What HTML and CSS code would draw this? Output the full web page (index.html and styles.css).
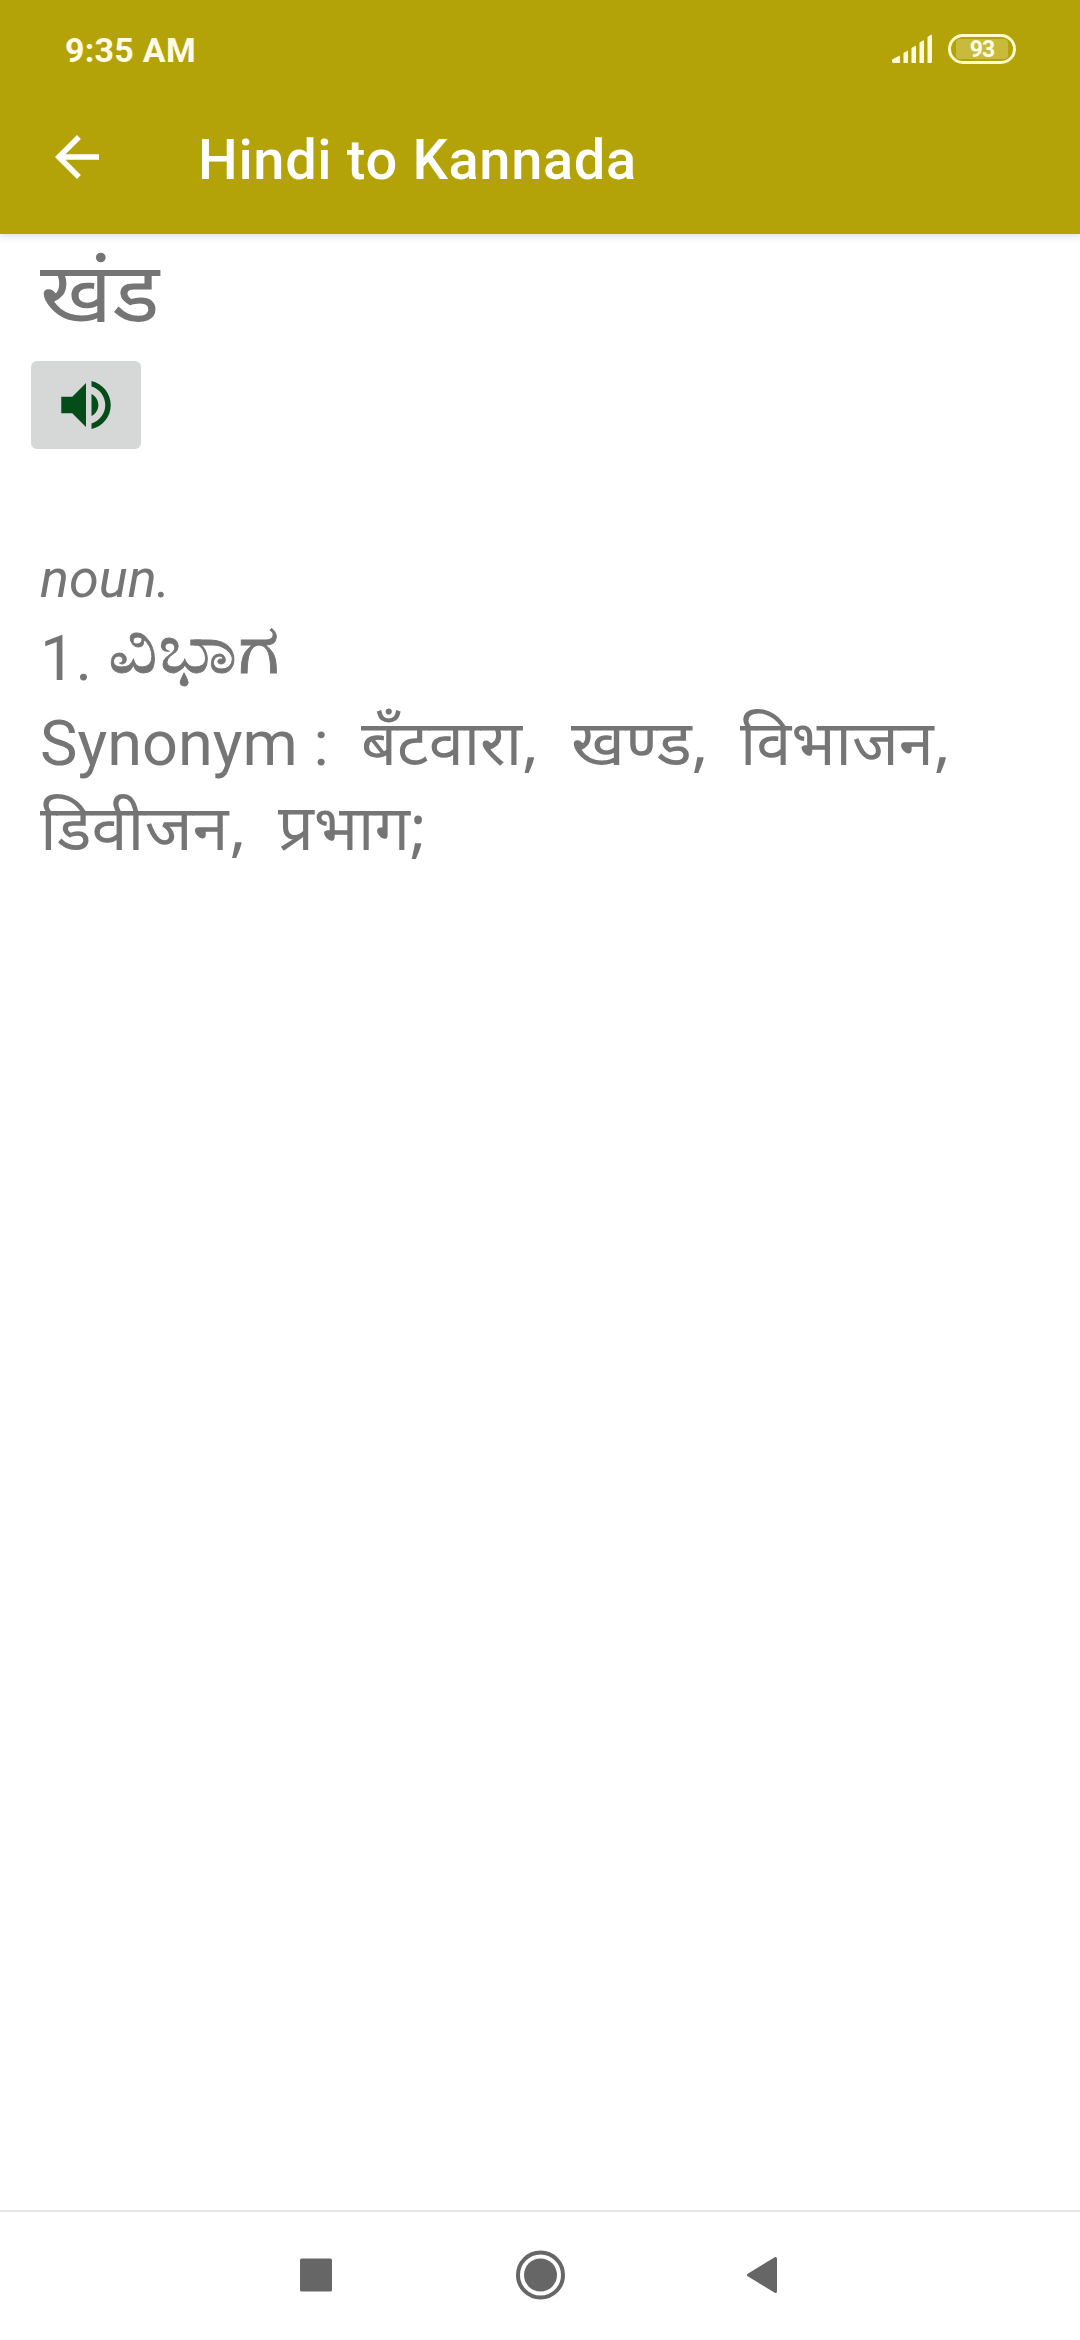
FILE: index.html
```html
<!DOCTYPE html>
<html lang="en">
<head>
<meta charset="utf-8">
<title>Hindi to Kannada</title>
<link rel="stylesheet" href="styles.css">
</head>
<body>
<header class="top">
  <div class="status">
    <span class="clock">9:35 AM</span>
    <svg class="signal" width="40" height="30" viewBox="0 0 40 30"><path d="M0 25.500L8 21.500V29H1.500Q0 29 0 27.500zM11.500 19L16 16.500V29h-4.500zM19.500 14L24 11.500V29h-4.500zM27.500 8.500L32 6V29h-4.500zM35.500 3L38.500 1Q40 .3 40 2V27.500Q40 29 38.500 29h-3z" fill="#fffbe0"/></svg>
    <span class="battery"><span class="charge">93</span></span>
  </div>
  <div class="bar">
    <svg class="back" width="44" height="44" viewBox="4 4 16 16"><path d="M20 11H7.830l5.590-5.590L12 4l-8 8 8 8 1.410-1.410L7.830 13H20z" fill="#fff"/></svg>
    <h1 class="title">Hindi to Kannada</h1>
  </div>
</header>
<main class="content">
  <div class="word" lang="hi">खंड</div>
  <button class="speak" aria-label="Listen"><svg width="66" height="66" viewBox="0 0 24 24"><path d="M3 9v6h4l5 5V4L7 9H3zm13.500 3c0-1.770-1.020-3.290-2.500-4.030v8.050c1.480-.73 2.500-2.250 2.500-4.020zM14 3.230v2.060c2.890.86 5 3.540 5 6.710s-2.110 5.850-5 6.710v2.060c4.010-.91 7-4.490 7-8.770s-2.990-7.860-7-8.770z" fill="#054d18"/></svg></button>
  <div class="noun">noun.</div>
  <div class="line">1. <span class="kn" lang="kn">ವಿಭಾಗ</span></div>
  <div class="line">Synonym :&nbsp; <span class="hi first" lang="hi">बँटवारा,&nbsp; <span class="wide khand">खण्ड</span>,&nbsp; विभाजन,</span></div>
  <div class="line"><span class="hi" lang="hi"><span class="wide division">डिवीजन</span>,&nbsp; प्रभाग;</span></div>
</main>
<nav class="nav">
  <svg width="34" height="50" viewBox="0 0 34 50"><rect x="1" y="8.500" width="32" height="33" rx="1.500" fill="#666"/></svg>
  <svg width="50" height="50" viewBox="0 0 50 50"><circle cx="25.500" cy="25" r="22.500" fill="none" stroke="#666" stroke-width="4"/><circle cx="25.500" cy="25" r="16.500" fill="#666"/></svg>
  <svg width="34" height="50" viewBox="0 0 34 50"><path d="M1.500 25L28.500 8.500V41.500z" fill="#666" stroke="#666" stroke-width="3" stroke-linejoin="round"/></svg>
</nav>
</body>
</html>
```
FILE: styles.css
```css
body{margin:0;font-family:Roboto,"Noto Sans",sans-serif;height:2340px;display:flex;flex-direction:column;color:#757575;background:#fff}
.top{height:234px;background:#b4a308;color:#fff;box-shadow:0 1px 8px rgba(40,60,110,.22)}
.status{display:flex;height:98px;align-items:center;padding:0 64px 0 65px;color:#fffbe6}
.clock{font-size:34px;font-weight:700;flex:1;letter-spacing:.25px;padding-top:1px}
.signal{margin-right:16px}
.battery{box-sizing:border-box;width:68px;height:30px;border:3px solid #fffbd0;border-radius:15px;display:flex;align-items:center;justify-content:center}
.charge{width:52px;height:20px;border-radius:4px;background:rgba(255,250,200,.27);font-size:23px;font-weight:700;line-height:21px;text-align:center;letter-spacing:-1px}
.bar{display:flex;align-items:center;height:118px;padding-left:55px;gap:99px}
.title{font-size:56px;font-weight:500;margin:6px 0 0;letter-spacing:.65px}
.content{flex:1;padding:0 40px}
.word{font-size:84px;line-height:120px;transform:scaleX(1.052);transform-origin:0 0}
.speak{border:0;border-radius:6px;background:#d6d8d7;width:110px;height:88px;margin:7px 0 0 -9px;padding:0;display:flex;align-items:center;justify-content:center}
.noun{font-size:54px;line-height:73px;font-style:italic;margin:93px 0 1px}
.line{font-size:63px;line-height:85px;height:85px;white-space:nowrap}
.hi{font-family:"Noto Sans",sans-serif;line-height:0;word-spacing:-.6px}
.first{margin-left:1px}
.kn{display:inline-block;line-height:0;font-size:70px;vertical-align:7px;transform:scaleX(1.1);transform-origin:0 50%;-webkit-text-stroke:.8px #757575}
.wide{display:inline-block;transform-origin:0 50%}
.khand{width:121px;transform:scaleX(1.05)}
.division{width:189.5px;transform:scaleX(1.03)}
.nav{box-sizing:border-box;height:130px;border-top:2px solid #e5e5e5;display:flex;align-items:center;justify-content:center;gap:182px;padding:0 0 2px}
```
